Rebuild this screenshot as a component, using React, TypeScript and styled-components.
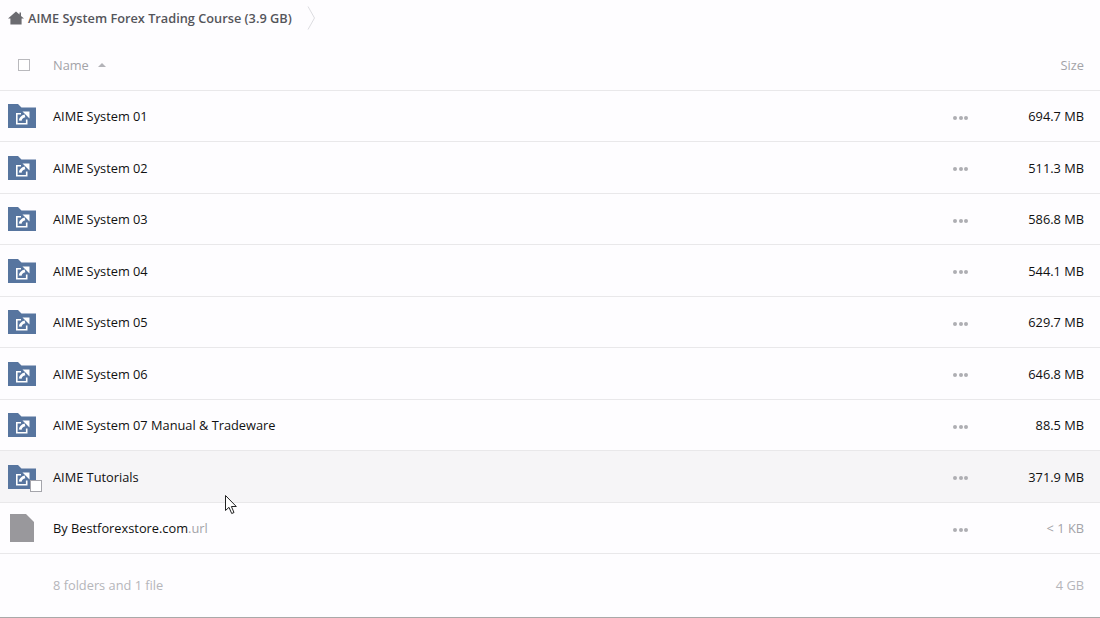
import React from "react";
import styled, { createGlobalStyle } from "styled-components";

const GlobalStyle = createGlobalStyle`
  html, body {
    margin: 0;
    padding: 0;
    background: #fefdff;
  }
`;

const Page = styled.div`
  position: relative;
  width: 1100px;
  height: 618px;
  overflow: hidden;
  background: #fefdff;
  font-family: "Open Sans", sans-serif;
  font-size: 12.8px;
  color: #111;
  box-sizing: border-box;
  border-bottom: 1px solid #a9a9a9;
`;

const Breadcrumb = styled.div`
  height: 36px;
  display: flex;
  align-items: center;
  padding-left: 8px;
  color: #55555b;
  font-size: 12.75px;
  font-weight: 600;
`;

const CrumbLabel = styled.span`
  margin-left: 4px;
  margin-right: 15.5px;
`;

const HeaderRow = styled.div`
  height: 54.6px;
  box-sizing: border-box;
  display: flex;
  align-items: center;
  padding: 4px 16px 0 0;
  border-bottom: 1px solid #e9e8ea;
  color: #a3a3a8;
`;

const CheckCell = styled.div`
  width: 53px;
  display: flex;
  justify-content: center;
  padding-right: 5px;
  box-sizing: border-box;
`;

const Check = styled.span`
  width: 12px;
  height: 12px;
  box-sizing: border-box;
  border: 1px solid #b9b9bd;
  background: #fff;
`;

const SortArrow = styled.span`
  margin-left: 9px;
  width: 0;
  height: 0;
  border-left: 4px solid transparent;
  border-right: 4px solid transparent;
  border-bottom: 4px solid #b3b3b8;
`;

const Grow = styled.div`
  flex: 1;
  display: flex;
  align-items: center;
`;

const Row = styled.div<{ $hover?: boolean }>`
  height: 51.5px;
  box-sizing: border-box;
  display: flex;
  align-items: center;
  padding: 1px 16px 0 0;
  border-bottom: 1px solid #e9e8ea;
  background: ${(p) => (p.$hover ? "#f6f5f7" : "transparent")};
`;

const IconCell = styled.div`
  position: relative;
  width: 53px;
  height: 24px;
  flex: none;
  padding-left: 8px;
  box-sizing: border-box;
`;

const SelectBox = styled.span`
  position: absolute;
  left: 30px;
  top: 15px;
  width: 10px;
  height: 10px;
  background: #fff;
  border: 1px solid #a5a5ab;
`;

const Extension = styled.span`
  color: #a3a3a8;
`;

const Dots = styled.div`
  width: 20px;
  display: flex;
  gap: 1.5px;
  padding-top: 3px;
  margin-right: 23px;
`;

const Dot = styled.span`
  width: 4px;
  height: 4px;
  border-radius: 50%;
  background: #aeaeb3;
`;

const Size = styled.div<{ $muted?: boolean }>`
  width: 88px;
  text-align: right;
  color: ${(p) => (p.$muted ? "#a3a3a8" : "#111")};
`;

const SummaryRow = styled.div`
  height: 62px;
  display: flex;
  align-items: center;
  padding: 0 16px 0 53px;
  color: #b5b5ba;
`;

const CursorMark = styled.svg`
  position: absolute;
  left: 225px;
  top: 495px;
`;

const HomeIcon = () => (
  <svg width="16" height="14" viewBox="0 0 16 14">
    <path d="M8 0.5 L11.5 3.5 V1.5 H13 V5 L16 7.5 H13.6 V13.5 H2.4 V7.5 H0 Z" fill="#6b6b70" />
  </svg>
);

const ChevronIcon = () => (
  <svg width="9" height="24" viewBox="0 0 9 24">
    <path d="M1 0.5 L7.5 12 L1 23.5" fill="none" stroke="#dcdce0" strokeWidth="1" />
  </svg>
);

const SharedFolderIcon = () => (
  <svg width="28" height="24" viewBox="0 0 28 24">
    <path d="M0 0 H10 L13.5 3.5 H28 V24 H0 Z" fill="#57759f" />
    <path d="M13 9.8 H8.8 V19.7 H18.7 V15.5" fill="none" stroke="#fff" strokeWidth="1.6" />
    <path d="M12.2 16.6 C12.6 14 14.6 12.4 17 11.8" fill="none" stroke="#fff" strokeWidth="2.8" />
    <path d="M14.5 7.5 H21.5 V14.5 Z" fill="#fff" />
  </svg>
);

const FileIcon = () => (
  <svg width="24" height="28" viewBox="0 0 24 28" style={{ marginLeft: 2, marginTop: -2 }}>
    <path d="M0 0 H16 L24 8 V28 H0 Z" fill="#99989c" />
  </svg>
);

const folders = [
  { name: "AIME System 01", size: "694.7 MB" },
  { name: "AIME System 02", size: "511.3 MB" },
  { name: "AIME System 03", size: "586.8 MB" },
  { name: "AIME System 04", size: "544.1 MB" },
  { name: "AIME System 05", size: "629.7 MB" },
  { name: "AIME System 06", size: "646.8 MB" },
  { name: "AIME System 07 Manual & Tradeware", size: "88.5 MB" },
  { name: "AIME Tutorials", size: "371.9 MB", hover: true },
];

const MoreDots = () => (
  <Dots>
    <Dot />
    <Dot />
    <Dot />
  </Dots>
);

export default function App() {
  return (
    <Page>
      <GlobalStyle />
      <Breadcrumb>
        <HomeIcon />
        <CrumbLabel>AIME System Forex Trading Course (3.9 GB)</CrumbLabel>
        <ChevronIcon />
      </Breadcrumb>
      <HeaderRow>
        <CheckCell>
          <Check />
        </CheckCell>
        <Grow>
          Name
          <SortArrow />
        </Grow>
        <span>Size</span>
      </HeaderRow>
      {folders.map((f) => (
        <Row key={f.name} $hover={f.hover}>
          <IconCell>
            <SharedFolderIcon />
            {f.hover && <SelectBox />}
          </IconCell>
          <Grow>{f.name}</Grow>
          <MoreDots />
          <Size>{f.size}</Size>
        </Row>
      ))}
      <Row>
        <IconCell>
          <FileIcon />
        </IconCell>
        <Grow>
          By Bestforexstore.com<Extension>.url</Extension>
        </Grow>
        <MoreDots />
        <Size $muted>&lt; 1 KB</Size>
      </Row>
      <SummaryRow>
        <Grow>8 folders and 1 file</Grow>
        <span>4 GB</span>
      </SummaryRow>
      <CursorMark width="13" height="20" viewBox="0 0 13 20">
        <path d="M0.5 0.5 V15.5 L4 12.3 L6.7 18.5 L9 17.5 L6.4 11.5 H11.3 Z" fill="#fff" stroke="#222" strokeWidth="1" />
      </CursorMark>
    </Page>
  );
}
